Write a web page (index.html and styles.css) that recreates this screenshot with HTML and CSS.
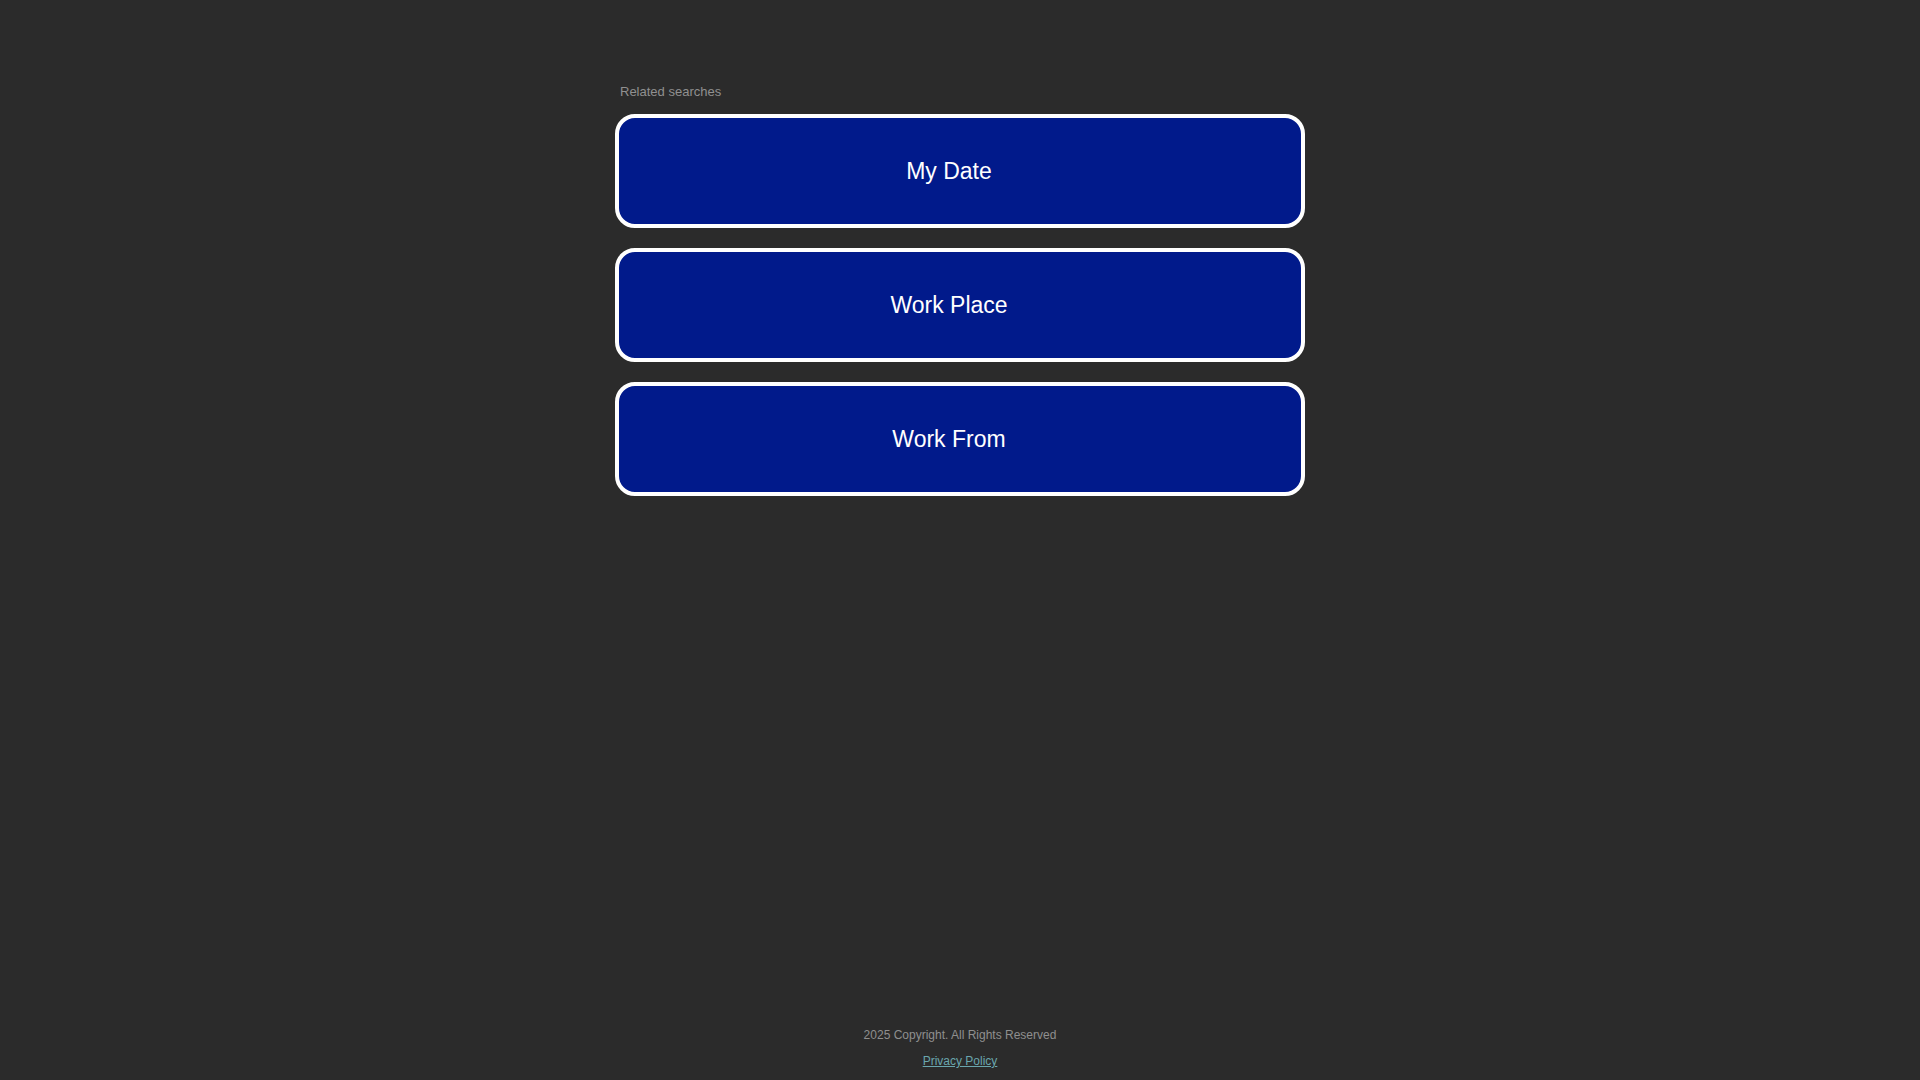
FILE: index.html
```html
<!DOCTYPE html>
<html lang="en">
<head>
<meta charset="utf-8">
<title>Related searches</title>
<link rel="stylesheet" href="styles.css">
</head>
<body>
<div class="page">
  <main class="content">
    <div class="heading">Related searches</div>
    <ul class="links">
      <li><a class="link" href="#">My Date</a></li>
      <li><a class="link" href="#">Work Place</a></li>
      <li><a class="link" href="#">Work From</a></li>
    </ul>
  </main>
  <footer class="footer">
    <div class="copyright">2025 Copyright. All Rights Reserved</div>
    <a class="privacy" href="#">Privacy Policy</a>
  </footer>
</div>
</body>
</html>
```
FILE: styles.css
```css
html, body {
  margin: 0;
  padding: 0;
  background: #2b2b2b;
  font-family: "Liberation Sans", Arial, sans-serif;
}

.page {
  min-height: 100vh;
  display: flex;
  flex-direction: column;
  align-items: center;
  box-sizing: border-box;
  padding-top: 84px;
  padding-bottom: 12px;
}

.content {
  width: 690px;
}

.heading {
  font-size: 13px;
  line-height: 16px;
  color: #909090;
  padding-left: 5px;
  margin-bottom: 14px;
}

.links {
  list-style: none;
  margin: 0;
  padding: 0;
  display: flex;
  flex-direction: column;
  gap: 20px;
}

.link {
  display: flex;
  align-items: center;
  justify-content: center;
  box-sizing: border-box;
  height: 114px;
  border: 4px solid #ffffff;
  border-radius: 20px;
  background: #011a8b;
  color: #ffffff;
  font-size: 23px;
  text-decoration: none;
  padding-right: 22px;
}

.footer {
  margin-top: auto;
  display: flex;
  flex-direction: column;
  align-items: center;
  gap: 12px;
  font-size: 12px;
  line-height: 14px;
}

.copyright {
  color: #8f8f8f;
}

.privacy {
  color: #6aa6ae;
  text-decoration: underline;
}
```
